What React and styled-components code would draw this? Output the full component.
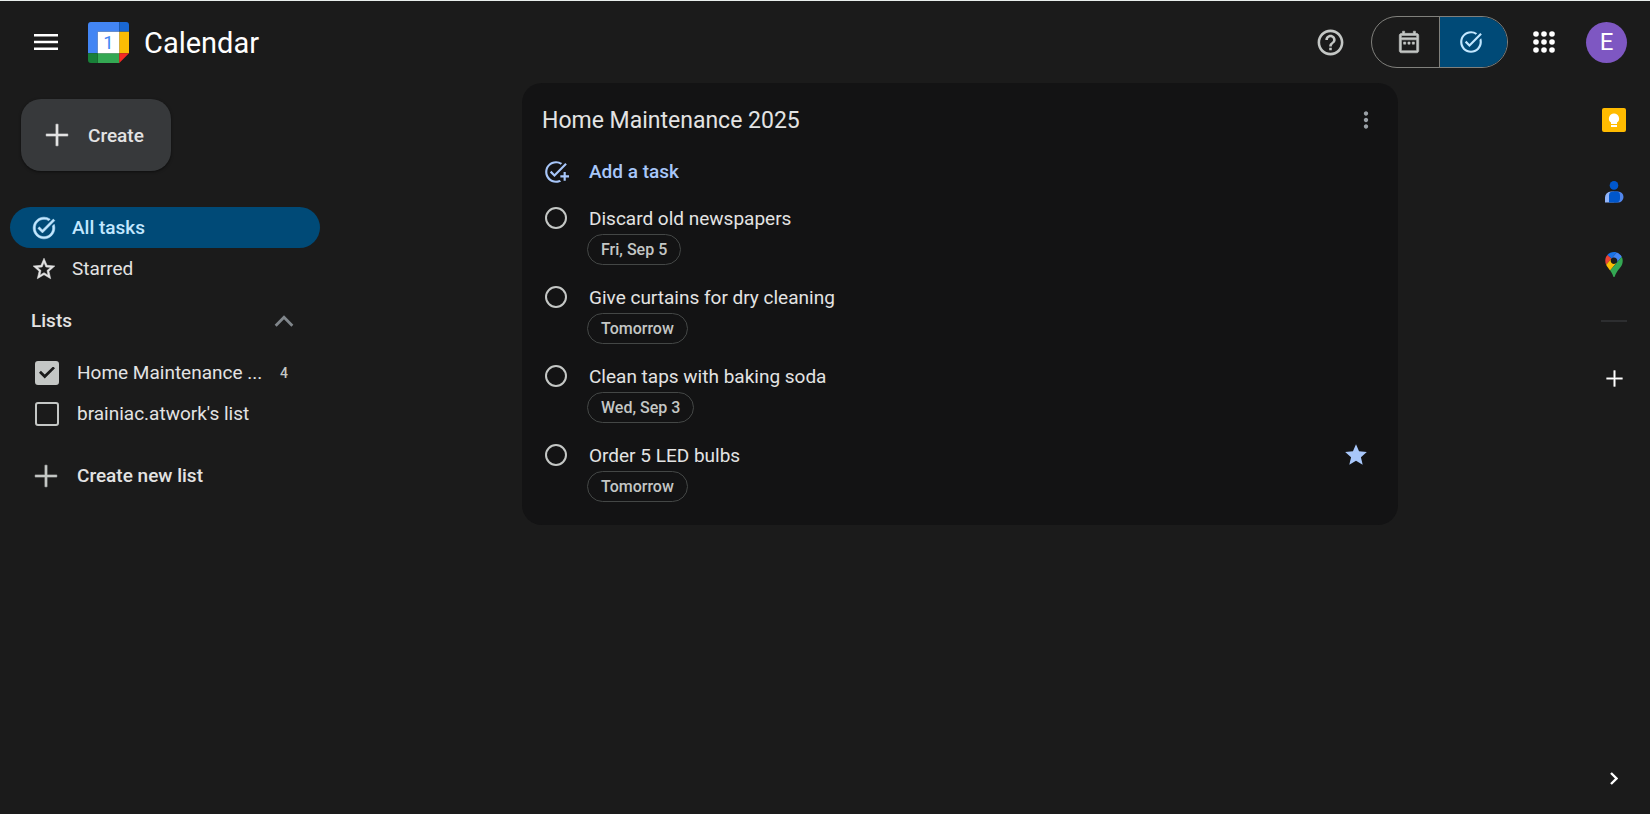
import React, { useState } from 'react';
import styled, { createGlobalStyle, css } from 'styled-components';

const GlobalStyle = createGlobalStyle`
  * { box-sizing: border-box; }
  body {
    margin: 0;
    background: #1b1b1b;
    color: #e3e3e3;
    font-family: Roboto, "Open Sans", sans-serif;
    font-size: 19px;
  }
  button, input {
    font: inherit;
    color: inherit;
    margin: 0;
  }
  button {
    background: none;
    border: 0;
    padding: 0;
    cursor: pointer;
  }
  svg { display: block; flex: none; }
`

const Page = styled.div`
  display: flex;
  flex-direction: column;
  min-height: 100vh;
  border-top: 1px solid #e9eeec;
`

const Header = styled.header`
  display: flex;
  align-items: center;
  justify-content: space-between;
  height: 82px;
  padding: 0 23px 0 22px;
`

const Brand = styled.div`
  display: flex;
  align-items: center;
`

const HeaderActions = styled.div`
  display: flex;
  align-items: center;
`

const IconButton = styled.button`
  display: flex;
  align-items: center;
  justify-content: center;
  width: ${props => props.$size || 48}px;
  height: ${props => props.$size || 48}px;
  border-radius: 50%;
  color: ${props => props.$color || '#fff'};
`

const LogoLink = styled.a`
  display: flex;
  align-items: center;
  gap: 15px;
  margin-left: 18px;
  color: #fff;
  text-decoration: none;
`

const LogoText = styled.span`
  padding-top: 2px;
  font-size: 29px;
  line-height: 36px;
`

const ViewSwitch = styled.div`
  display: flex;
  height: 52px;
  margin: 0 12px 0 17px;
  border: 1px solid #80807c;
  border-radius: 26px;
  overflow: hidden;
`

const SwitchButton = styled.button`
  display: flex;
  align-items: center;
  justify-content: center;
  width: 67px;
  padding-left: 6px;
  color: #c4c7c5;
  ${props => props.$active && css`
    width: 68px;
    padding: 0 5px 0 0;
    background: #004a77;
    color: #c2e7ff;
    border-left: 1px solid #80807c;
  `}
`

const Avatar = styled.button`
  width: 41px;
  height: 41px;
  margin-left: 18px;
  border-radius: 50%;
  background: #7e57c2;
  color: #fff;
  font-size: 24px;
`

const Body = styled.div`
  display: flex;
  flex: 1;
`

const Sidebar = styled.nav`
  flex: none;
  width: 342px;
  padding: 16px 22px 0 10px;
`

const CreateButton = styled.button`
  display: flex;
  align-items: center;
  gap: 18px;
  height: 72px;
  margin: 0 0 36px 11px;
  padding: 0 27px 0 23px;
  border-radius: 20px;
  background: #37393b;
  box-shadow: 0 1px 3px rgba(0, 0, 0, 0.5);
  font-weight: 500;
`

const NavItem = styled.a`
  display: flex;
  align-items: center;
  gap: 15px;
  height: 41px;
  padding-left: 21px;
  border-radius: 21px;
  color: inherit;
  text-decoration: none;
  ${props => props.$active && css`
    background: #004a77;
    color: #c2e7ff;
    font-weight: 500;
  `}
`

const ListsToggle = styled.button`
  display: flex;
  align-items: center;
  justify-content: space-between;
  width: 100%;
  height: 41px;
  margin: 11px 0;
  padding: 0 24px 0 21px;
  font-weight: 500;
`

const ListRow = styled.label`
  display: flex;
  align-items: center;
  height: 41px;
  padding: 0 32px 0 25px;
  cursor: pointer;
`

const ListName = styled.span`
  flex: 1;
  margin-left: 18px;
  white-space: nowrap;
`

const Count = styled.span`
  color: #c4c7c5;
  font-size: 14px;
  font-weight: 500;
`

const Checkbox = styled.input.attrs({ type: 'checkbox' })`
  appearance: none;
  display: grid;
  place-content: center;
  width: 24px;
  height: 24px;
  border: 2px solid #c4c7c5;
  border-radius: 3px;
  &:checked {
    background: #c4c7c5;
  }
  &:checked::after {
    content: '';
    width: 16px;
    height: 12px;
    background: #1b1b1b;
    clip-path: polygon(0 52%, 12% 36%, 36% 66%, 88% 0, 100% 14%, 36% 100%);
  }
`

const NewListButton = styled.button`
  display: flex;
  align-items: center;
  gap: 18px;
  height: 41px;
  margin-top: 21px;
  padding-left: 23px;
  font-weight: 500;
  svg { color: #c4c7c5; }
`

const Main = styled.main`
  flex: 1;
`

const Card = styled.section`
  max-width: 876px;
  margin: 0 auto;
  padding: 17px 20px;
  border-radius: 20px;
  background: #131314;
`

const CardHeader = styled.div`
  display: flex;
  align-items: center;
  justify-content: space-between;
  height: 40px;
`

const CardTitle = styled.h2`
  margin: 0;
  padding-top: 2px;
  font-size: 23px;
  font-weight: 400;
  line-height: 32px;
`

const AddTask = styled.button`
  display: flex;
  align-items: center;
  gap: 20px;
  height: 41px;
  margin-top: 11px;
  padding-left: 1px;
  color: #a8c7fa;
  font-weight: 500;
`

const TaskList = styled.ul`
  margin: 0;
  padding: 0;
  list-style: none;
`

const TaskItem = styled.li`
  display: grid;
  grid-template-columns: 44px 1fr auto;
  grid-template-rows: 32px 31px;
  align-items: center;
  height: 79px;
  padding: 10px 9px 6px 3px;
`

const TaskCheck = styled.input.attrs({ type: 'checkbox' })`
  appearance: none;
  width: 22px;
  height: 22px;
  border: 2px solid #c4c7c5;
  border-radius: 50%;
  cursor: pointer;
  &:checked {
    background: #a8c7fa;
  }
`

const DateChip = styled.button`
  grid-column: 2;
  justify-self: start;
  height: 31px;
  margin-left: -2px;
  padding: 0 13px;
  border: 1px solid #444746;
  border-radius: 16px;
  color: #c4c7c5;
  font-size: 16px;
  font-weight: 500;
`

const SidePanel = styled.aside`
  display: flex;
  flex-direction: column;
  align-items: center;
  flex: none;
  width: 72px;
  padding: 13px 0 12px;
`

const Apps = styled.div`
  display: flex;
  flex-direction: column;
  gap: 24px;
`

const Divider = styled.hr`
  width: 26px;
  height: 2px;
  margin: 32px 0;
  border: 0;
  background: #2d2e30;
`

const PanelFooter = styled.div`
  margin-top: auto;
`

const paths = {
  menu: 'M0 4h24v2.4H0zM0 10.8h24v2.4H0zM0 17.6h24V20H0z',
  help: 'M11 18h2v-2h-2v2zm1-16C6.48 2 2 6.48 2 12s4.48 10 10 10 10-4.48 10-10S17.52 2 12 2zm0 18c-4.41 0-8-3.59-8-8s3.59-8 8-8 8 3.59 8 8-3.59 8-8 8zm0-14c-2.21 0-4 1.79-4 4h2c0-1.1.9-2 2-2s2 .9 2 2c0 2-3 1.75-3 5h2c0-2.25 3-2.5 3-5 0-2.21-1.79-4-4-4z',
  calendar: 'M19 4h-1V2h-2v2H8V2H6v2H5c-1.1 0-2 .9-2 2v14c0 1.1.9 2 2 2h14c1.1 0 2-.9 2-2V6c0-1.1-.9-2-2-2zm0 16H5V10h14v10zm0-12H5V6h14v2zM7 12h2v2H7zM11 12h2v2h-2zM15 12h2v2h-2z',
  task: 'M22 5.18 10.59 16.6l-4.24-4.24 1.41-1.41 2.83 2.83 10-10L22 5.18zm-2.21 5.04c.13.57.21 1.17.21 1.78 0 4.42-3.58 8-8 8s-8-3.58-8-8 3.58-8 8-8c1.58 0 3.04.46 4.28 1.25l1.44-1.44A9.9 9.9 0 0 0 12 2C6.48 2 2 6.48 2 12s4.48 10 10 10 10-4.48 10-10c0-1.19-.22-2.33-.6-3.39l-1.61 1.61z',
  addTask: 'M22 5.18 10.59 16.6l-4.24-4.24 1.41-1.41 2.83 2.83 10-10L22 5.18zM12 20c-4.41 0-8-3.59-8-8s3.59-8 8-8c1.57 0 3.04.46 4.28 1.25l1.45-1.45C16.1 2.67 14.13 2 12 2 6.48 2 2 6.48 2 12s4.48 10 10 10c1.73 0 3.36-.44 4.78-1.22l-1.5-1.5c-1 .46-2.11.72-3.28.72zM19 15h-3v2h3v3h2v-3h3v-2h-3v-3h-2v3z',
  star: 'M12 17.27 18.18 21l-1.64-7.03L22 9.24l-7.19-.61L12 2 9.19 8.63 2 9.24l5.46 4.73L5.82 21z',
  starOutline: 'M22 9.24l-7.19-.62L12 2 9.19 8.63 2 9.24l5.46 4.73L5.82 21 12 17.27 18.18 21l-1.63-7.03L22 9.24zM12 15.4l-3.76 2.27 1-4.28-3.32-2.88 4.38-.38L12 6.1l1.71 4.04 4.38.38-3.32 2.88 1 4.28L12 15.4z',
  up: 'M12 8l-6.6 6.6 1.4 1.4L12 10.8l5.2 5.2 1.4-1.4z',
  plus: 'M11 2h2v9h9v2h-9v9h-2v-9H2v-2h9z',
  more: 'M12 8c1.1 0 2-.9 2-2s-.9-2-2-2-2 .9-2 2 .9 2 2 2zm0 2c-1.1 0-2 .9-2 2s.9 2 2 2 2-.9 2-2-.9-2-2-2zm0 6c-1.1 0-2 .9-2 2s.9 2 2 2 2-.9 2-2-.9-2-2-2z',
}

function Icon({ name, size = 26, bold }) {
  return (
    <svg
      width={size}
      height={size}
      viewBox="0 0 24 24"
      fill="currentColor"
      stroke={bold ? 'currentColor' : 'none'}
      strokeWidth="0.5"
      aria-hidden="true"
    >
      <path d={paths[name]} />
    </svg>
  )
}

function CalendarLogo() {
  return (
    <svg width="41" height="41" viewBox="0 0 42 42" aria-hidden="true">
      <path fill="#4285f4" d="M3 0h29v10H10v22H0V3a3 3 0 0 1 3-3z" />
      <path fill="#1967d2" d="M32 0h7a3 3 0 0 1 3 3v7H32z" />
      <path fill="#fbbc04" d="M32 10h10v22H32z" />
      <path fill="#34a853" d="M10 32h22v10H10z" />
      <path fill="#188038" d="M0 32h10v10H3a3 3 0 0 1-3-3z" />
      <path fill="#f72a25" d="M32 32h10L32 42z" />
      <path fill="#fff" d="M10 10h22v22H10z" />
      <text x="21" y="28" textAnchor="middle" fontSize="19" fill="#4285f4">1</text>
    </svg>
  )
}

function AppsIcon() {
  const steps = [3, 11, 19]
  return (
    <svg width="22" height="22" viewBox="0 0 22 22" fill="currentColor" aria-hidden="true">
      {steps.map(y => steps.map(x => <circle key={x + '-' + y} cx={x} cy={y} r="2.8" />))}
    </svg>
  )
}

function KeepIcon() {
  return (
    <svg width="26" height="26" viewBox="0 0 26 26" aria-hidden="true">
      <rect x="1" y="1" width="24" height="24" rx="2" fill="#ffbb00" />
      <path fill="#fff" d="M13 6.4a5.1 5.1 0 0 0-3 9.2V17h6v-1.4a5.1 5.1 0 0 0-3-9.2zM10 18h6v2h-6z" />
    </svg>
  )
}

function ContactsIcon() {
  return (
    <svg width="26" height="26" viewBox="0 0 26 26" aria-hidden="true">
      <circle cx="13" cy="6.4" r="4.3" fill="#0057cc" />
      <path fill="#91b4f9" d="M10 12.5h3V23.5H4V18.500a6 6 0 0 1 6-6z" />
      <path fill="#5186ec" d="M13 12.5h4a5.500 5.500 0 0 1 0 11h-4z" />
      <path fill="#0057cc" d="M12 12.5h3a4 4 0 0 1 4 4v3a4 4 0 0 1-4 4H8v-7a4 4 0 0 1 4-4z" />
    </svg>
  )
}

function MapsIcon() {
  return (
    <svg width="26" height="25" viewBox="0 0 92.3 132.3" aria-hidden="true">
      <path fill="#1a73e8" d="M60.2 2.2C55.8.8 51 0 46.1 0 32 0 19.3 6.4 10.8 16.5l21.8 18.3L60.2 2.2z" />
      <path fill="#ea4335" d="M10.8 16.5C4.1 24.5 0 34.9 0 46.1c0 8.7 1.7 15.7 4.6 22l28-33.3-21.8-18.3z" />
      <path fill="#4285f4" d="M46.2 28.5c9.8 0 17.7 7.9 17.7 17.7 0 4.3-1.6 8.3-4.2 11.4 0 0 13.9-16.6 27.5-32.7-5.6-10.8-15.3-19-27-22.7L32.6 34.8c3.3-3.8 8.1-6.3 13.6-6.3" />
      <path fill="#fbbc04" d="M46.2 63.8c-9.8 0-17.7-7.9-17.7-17.7 0-4.3 1.5-8.3 4.1-11.3l-28 33.3c4.8 10.6 12.8 19.2 21 29.9l34.1-40.5c-3.3 3.9-8.1 6.3-13.5 6.3" />
      <path fill="#34a853" d="M59.1 109.2c15.4-24.1 33.3-35 33.3-63 0-7.7-1.9-14.9-5.2-21.3L25.6 98c2.6 3.4 5.3 7.3 7.9 11.3 9.4 14.5 6.8 23.1 12.8 23.1s3.4-8.7 12.8-23.2" />
    </svg>
  )
}

const tasks = [
  { id: 1, name: 'Discard old newspapers', date: 'Fri, Sep 5' },
  { id: 2, name: 'Give curtains for dry cleaning', date: 'Tomorrow' },
  { id: 3, name: 'Clean taps with baking soda', date: 'Wed, Sep 3' },
  { id: 4, name: 'Order 5 LED bulbs', date: 'Tomorrow', starred: true },
]

const lists = [
  { id: 1, name: 'Home Maintenance ...', count: 4, checked: true },
  { id: 2, name: "brainiac.atwork's list", checked: false },
]

function Task({ task }) {
  const id = 'task-' + task.id
  return (
    <TaskItem>
      <TaskCheck id={id} />
      <label htmlFor={id}>{task.name}</label>
      {task.starred ? (
        <IconButton $size={26} $color="#a8c7fa" aria-label="Remove star">
          <Icon name="star" />
        </IconButton>
      ) : <span />}
      <DateChip>{task.date}</DateChip>
    </TaskItem>
  )
}

export default function App() {
  const [open, setOpen] = useState(true)

  return (
    <>
      <GlobalStyle />
      <Page>
        <Header>
          <Brand>
            <IconButton aria-label="Main menu"><Icon name="menu" size={24} /></IconButton>
            <LogoLink href="#"><CalendarLogo /><LogoText>Calendar</LogoText></LogoLink>
          </Brand>
          <HeaderActions>
            <IconButton $color="#c4c7c5" aria-label="Support"><Icon name="help" size={31} /></IconButton>
            <ViewSwitch>
              <SwitchButton aria-label="Calendar view"><Icon name="calendar" bold /></SwitchButton>
              <SwitchButton $active aria-label="Tasks view"><Icon name="task" /></SwitchButton>
            </ViewSwitch>
            <IconButton aria-label="Google apps"><AppsIcon /></IconButton>
            <Avatar>E</Avatar>
          </HeaderActions>
        </Header>
        <Body>
          <Sidebar>
            <CreateButton><Icon name="plus" bold />Create</CreateButton>
            <NavItem href="#" $active><Icon name="task" bold />All tasks</NavItem>
            <NavItem href="#"><Icon name="starOutline" bold />Starred</NavItem>
            <ListsToggle aria-expanded={open} onClick={() => setOpen(!open)}>
              Lists
              <IconButton as="span" $size={24} $color="#80868b"><Icon name="up" size={34} /></IconButton>
            </ListsToggle>
            {open && lists.map(list => (
              <ListRow key={list.id}>
                <Checkbox defaultChecked={list.checked} />
                <ListName>{list.name}</ListName>
                {list.count && <Count>{list.count}</Count>}
              </ListRow>
            ))}
            <NewListButton><Icon name="plus" bold />Create new list</NewListButton>
          </Sidebar>
          <Main>
            <Card>
              <CardHeader>
                <CardTitle>Home Maintenance 2025</CardTitle>
                <IconButton $size={24} $color="#9aa0a6" aria-label="List options"><Icon name="more" /></IconButton>
              </CardHeader>
              <AddTask><Icon name="addTask" />Add a task</AddTask>
              <TaskList>
                {tasks.map(task => <Task key={task.id} task={task} />)}
              </TaskList>
            </Card>
          </Main>
          <SidePanel>
            <Apps>
              <IconButton aria-label="Keep"><KeepIcon /></IconButton>
              <IconButton aria-label="Contacts"><ContactsIcon /></IconButton>
              <IconButton aria-label="Maps"><MapsIcon /></IconButton>
            </Apps>
            <Divider />
            <IconButton aria-label="Get add-ons"><Icon name="plus" size={19} bold /></IconButton>
            <PanelFooter>
              <IconButton aria-label="Hide side panel">
                <svg width="8" height="13" viewBox="0 0 8 13" fill="none" stroke="currentColor" strokeWidth="2.4" aria-hidden="true">
                  <path d="M1 1l5.5 5.5L1 12" />
                </svg>
              </IconButton>
            </PanelFooter>
          </SidePanel>
        </Body>
      </Page>
    </>
  )
}
